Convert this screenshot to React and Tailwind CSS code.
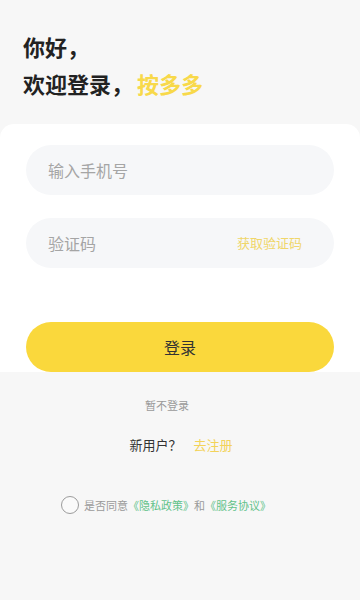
import React from "react";

// 登录页
const App = () => {
  return (
    <div
      className="min-h-[600px] bg-[#f7f7f7] flex flex-col"
      style={{ fontFamily: '"Noto Sans CJK SC", "Noto Sans", sans-serif' }}
    >
      {/* 标题 */}
      <div className="pt-[28px] pl-[23px] text-[22px] leading-[37px] font-bold text-[#222]">
        <div>你好，</div>
        <div>
          欢迎登录，<span className="ml-[4px] text-[#f8d94a]">按多多</span>
        </div>
      </div>

      {/* 表单卡片 */}
      <div className="mt-[22px] bg-white rounded-t-[14px] px-[26px] pt-[21px]">
        <div className="h-[50px] rounded-full bg-[#f6f7f9] flex items-center pl-[22px] text-[16px] text-[#a5a5a5]">
          输入手机号
        </div>
        <div className="mt-[23px] h-[50px] rounded-full bg-[#f6f7f9] flex items-center justify-between pl-[22px] pr-[32px]">
          <span className="text-[16px] text-[#a5a5a5]">验证码</span>
          <span className="text-[13px] text-[#f0d66a]">获取验证码</span>
        </div>
        <button className="mt-[54px] w-full h-[50px] rounded-full bg-[#fad83c] text-[16px] text-[#333] flex items-center justify-center">
          登录
        </button>
      </div>

      {/* 底部 */}
      <div className="mt-[25px] flex justify-center pr-[26px] text-[11px] leading-[16px] text-[#9a9a9a]">
        暂不登录
      </div>
      <div className="mt-[23px] flex justify-center items-center gap-[12px] pl-[2px] text-[13px] leading-[18px]">
        <span className="text-[#333]">新用户？</span>
        <span className="text-[#f3d35a]">去注册</span>
      </div>
      <div className="mt-[42px] pl-[61px] flex items-center gap-[5px] text-[11px] leading-[16px]">
        <span className="w-[18px] h-[18px] rounded-full border border-[#9c9c9c] bg-white/40" />
        <span className="text-[#9a9a9a]">
          是否同意<span className="text-[#62c28a]">《隐私政策》</span>和
          <span className="text-[#62c28a]">《服务协议》</span>
        </span>
      </div>
    </div>
  );
};

export default App;
